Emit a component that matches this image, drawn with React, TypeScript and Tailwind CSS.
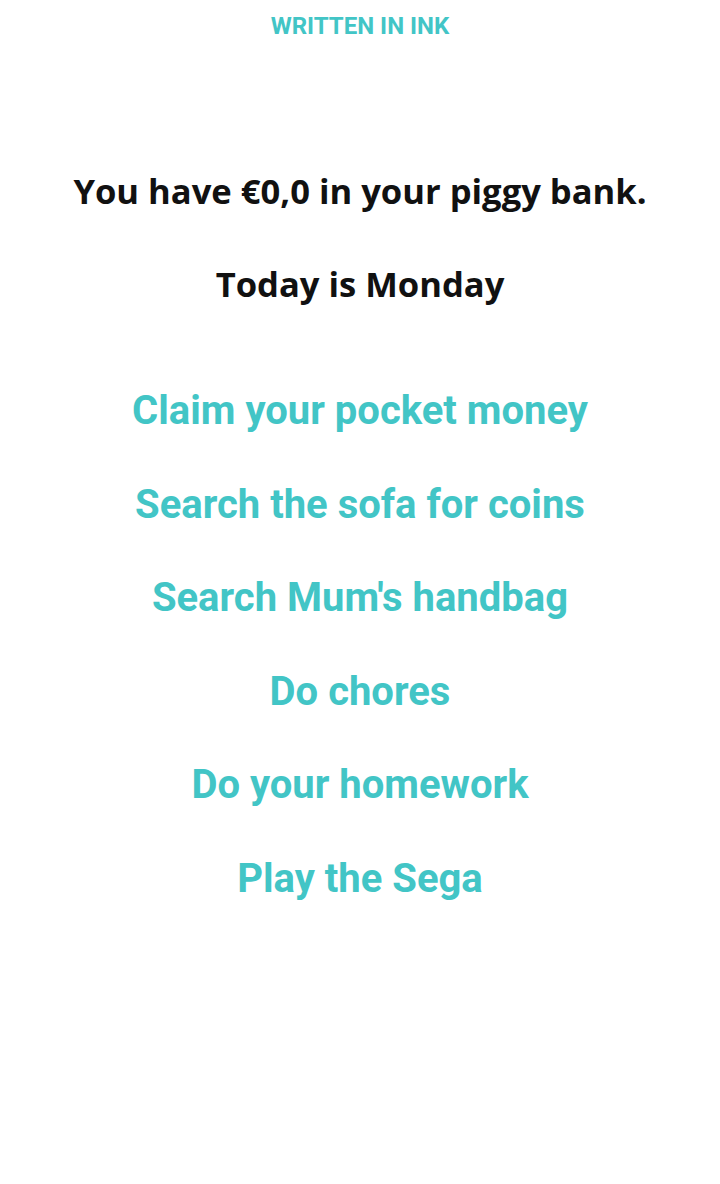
export default function App() {
  const actions = [
    "Claim your pocket money",
    "Search the sofa for coins",
    "Search Mum's handbag",
    "Do chores",
    "Do your homework",
    "Play the Sega",
  ];

  return (
    <div className="min-h-[1184px] w-[720px] bg-white flex flex-col items-center">
      <header className="h-[52px] flex items-center justify-center">
        <span className="font-['Roboto',sans-serif] font-bold text-[24px] text-[#42c5c6]">
          WRITTEN IN INK
        </span>
      </header>

      <div className="mt-[115px] flex flex-col items-center gap-[45px] font-['Open_Sans',sans-serif] font-bold text-[34.6px] text-[#111] leading-[48px]">
        <p>You have €0,0 in your piggy bank.</p>
        <p>Today is Monday</p>
      </div>

      <nav className="mt-[79px] flex flex-col items-center gap-[45.6px]">
        {actions.map((a) => (
          <button
            key={a}
            className="font-['Roboto',sans-serif] font-bold text-[40px] leading-[48px] text-[#42c5c6]"
          >
            {a}
          </button>
        ))}
      </nav>
    </div>
  );
}
